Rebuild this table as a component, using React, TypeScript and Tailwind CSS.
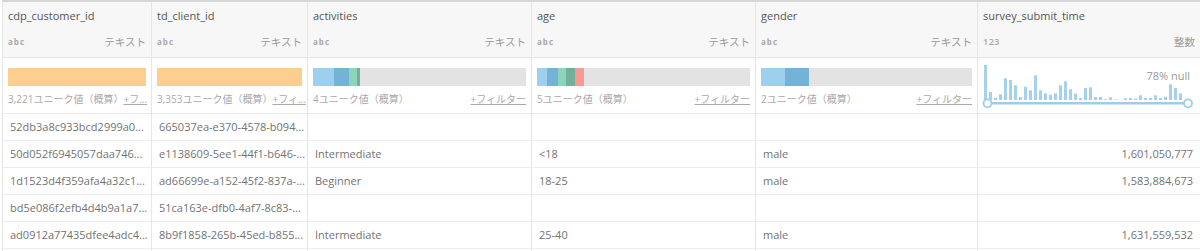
import React from "react";

type Seg = { w: number; c: string };
type Col = {
  name: string;
  icon: string;
  label: string;
  kind: "solid" | "seg" | "hist";
  segs?: Seg[];
  summary?: string;
  link?: string;
  align?: "left" | "right";
};

const LB = "#9ecfec";
const B = "#74b2d6";
const G = "#8ed4bd";
const DG = "#73b09b";
const R = "#f69b93";

const cols: Col[] = [
  { name: "cdp_customer_id", icon: "abc", label: "テキスト", kind: "solid", summary: "3,221ユニーク値（概算）", link: "+フ..." },
  { name: "td_client_id", icon: "abc", label: "テキスト", kind: "solid", summary: "3,353ユニーク値（概算）", link: "+フィ..." },
  {
    name: "activities",
    icon: "abc",
    label: "テキスト",
    kind: "seg",
    segs: [
      { w: 21, c: LB },
      { w: 15, c: B },
      { w: 8, c: G },
      { w: 3, c: DG },
    ],
    summary: "4ユニーク値（概算）",
    link: "+フィルター",
  },
  {
    name: "age",
    icon: "abc",
    label: "テキスト",
    kind: "seg",
    segs: [
      { w: 10, c: LB },
      { w: 11, c: B },
      { w: 8, c: G },
      { w: 9, c: DG },
      { w: 9, c: R },
    ],
    summary: "5ユニーク値（概算）",
    link: "+フィルター",
  },
  {
    name: "gender",
    icon: "abc",
    label: "テキスト",
    kind: "seg",
    segs: [
      { w: 24, c: LB },
      { w: 24, c: B },
    ],
    summary: "2ユニーク値（概算）",
    link: "+フィルター",
  },
  { name: "survey_submit_time", icon: "123", label: "整数", kind: "hist", align: "right" },
];

const rows: string[][] = [
  ["52db3a8c933bcd2999a0...", "665037ea-e370-4578-b094...", "", "", "", ""],
  ["50d052f6945057daa746...", "e1138609-5ee1-44f1-b646-...", "Intermediate", "<18", "male", "1,601,050,777"],
  ["1d1523d4f359afa4a32c1...", "ad66699e-a152-45f2-837a-...", "Beginner", "18-25", "male", "1,583,884,673"],
  ["bd5e086f2efb4d4b9a1a7...", "51ca163e-dfb0-4af7-8c83-...", "", "", "", ""],
  ["ad0912a77435dfee4adc4...", "8b9f1858-265b-45ed-b855...", "Intermediate", "25-40", "male", "1,631,559,532"],
];

const hist = [
  35, 8, 2.3, 5.7, 21.7, 20, 14.7, 3, 13.3, 9.7, 24.7, 9.7, 6.7, 5.3, 6.7, 14.7, 18.7, 10.7, 6.3, 2, 12, 12.7, 3, 3,
  0.8, 2.7, 0.6, 0, 1.7, 2, 1.3, 4.7, 2, 2, 4.7, 2, 3.3, 15.7, 12, 6.7,
];

const font = { fontFamily: '"Open Sans", "Noto Sans CJK JP", sans-serif' };

function Histogram() {
  const base = 41;
  return (
    <svg width="214" height="52" viewBox="0 0 214 52" className="block">
      {hist.map((h, i) =>
        h > 0 ? <rect key={i} x={2 + i * 5} y={base - h} width={3} height={h} fill="#a3d1ee" /> : null
      )}
      <line x1={5.5} y1={44.3} x2={206} y2={44.3} stroke="#9ecdeb" strokeWidth={2.6} />
      <circle cx={5.5} cy={44.3} r={4} fill="#fff" stroke="#9ecdeb" strokeWidth={1.8} />
      <circle cx={206} cy={44.3} r={4} fill="#fff" stroke="#9ecdeb" strokeWidth={1.8} />
    </svg>
  );
}

function SummaryCell({ col }: { col: Col }) {
  if (col.kind === "hist") {
    return (
      <div className="relative h-[56px] border-b border-[#ececec] pl-[4px] pt-[1px]">
        <Histogram />
        <span className="absolute right-[10px] top-[11px] text-[11px] leading-[14px] text-[#9a9a9a]">78% null</span>
      </div>
    );
  }
  return (
    <div className="flex h-[56px] flex-col border-b border-[#ececec] px-[5px] pt-[10px]">
      {col.kind === "solid" ? (
        <div className="h-[18px] w-full bg-[#fccf90]" />
      ) : (
        <div className="flex h-[18px] w-full bg-[#e3e3e3]">
          {col.segs!.map((s, i) => (
            <div key={i} className="h-full" style={{ width: s.w, backgroundColor: s.c }} />
          ))}
        </div>
      )}
      <div className="mt-[6px] flex items-center justify-between text-[10px] leading-[14px] text-[#aaaaaa]">
        <span className="whitespace-nowrap">{col.summary}</span>
        <span className="whitespace-nowrap underline">{col.link}</span>
      </div>
    </div>
  );
}

export default function App() {
  const widths = "grid-cols-[150px_156px_224px_224px_222px_1fr]";
  return (
    <div className="h-[251px] overflow-hidden bg-white pl-[2px]" style={font}>
      <div className="h-full border-t-2 border-[#d6d6d6]">
        <div className={`grid h-full ${widths}`}>
          {cols.map((c, ci) => (
            <div
              key={ci}
              className={`flex min-w-0 flex-col ${ci < 5 ? "border-r border-[#e6e6e6]" : ""} ${ci === 0 ? "border-l border-[#e6e6e6]" : ""}`}
            >
              <div className="h-[56px] border-b border-[#e6e6e6] bg-[#f7f7f7] px-[5px]">
                <div className="pt-[6px] text-[11px] leading-[16px] text-[#555555]">{c.name}</div>
                <div className="mt-[11px] flex items-center justify-between">
                  <span
                    className={`leading-[14px] text-[#aaaaaa] ${c.icon === "abc" ? "text-[8px] font-bold tracking-[1px]" : "text-[9px] font-semibold tracking-[0.5px]"}`}
                  >
                    {c.icon}
                  </span>
                  <span className="text-[10.5px] leading-[14px] text-[#9a9a9a]">{c.label}</span>
                </div>
              </div>
              <SummaryCell col={c} />
              {rows.map((r, ri) => (
                <div
                  key={ri}
                  className={`flex h-[27px] items-center whitespace-nowrap border-b border-[#ededed] px-[7px] text-[11px] text-[#737373] ${c.align === "right" ? "justify-end" : ""}`}
                >
                  {r[ci]}
                </div>
              ))}
            </div>
          ))}
        </div>
      </div>
    </div>
  );
}
